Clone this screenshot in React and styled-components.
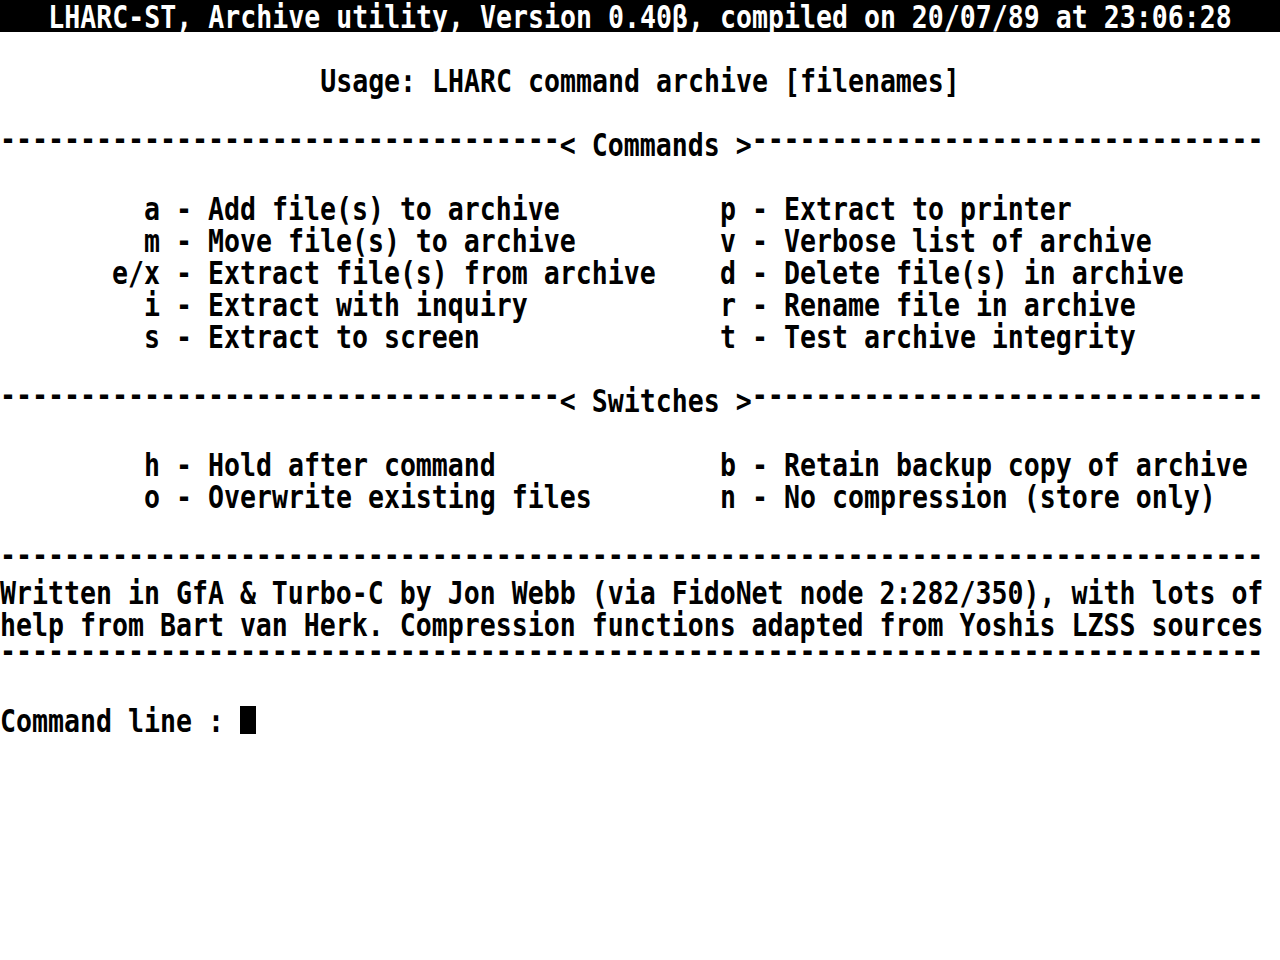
import React from "react";
import styled, { createGlobalStyle } from "styled-components";

const Global = createGlobalStyle`
  html, body { margin: 0; padding: 0; background: #ffffff; }
  body { width: 1280px; height: 960px; overflow: hidden; }
`;

const Screen = styled.main`
  width: 1280px;
  height: 960px;
  background: #ffffff;
  color: #000000;
  font-family: "DejaVu Sans Mono", "Liberation Mono", monospace;
  font-weight: bold;
  font-size: 26.576px;
  display: flex;
  flex-direction: column;
`;

const Line = styled.div`
  height: 32px;
  line-height: 32px;
  white-space: pre;
  display: flex;
  align-items: flex-start;
  justify-content: ${(p) => (p.$center ? "center" : "flex-start")};
  background: ${(p) => (p.$inverse ? "#000000" : "transparent")};
  color: ${(p) => (p.$inverse ? "#ffffff" : "#000000")};
`;

const Blank = styled.div`
  height: ${(p) => (p.$rows || 1) * 32}px;
`;

const Text = styled.span`
  display: inline-block;
  height: 26px;
  overflow: visible;
  white-space: pre;
  transform: scaleY(1.18);
  transform-origin: 0 10px;
  text-align: ${(p) => (p.$right ? "right" : "left")};
`;

const Dashes = styled(Text)`
  transform: translateY(-6px) scaleY(1.18);
`;

const CommandRow = styled.div`
  height: 32px;
  line-height: 32px;
  white-space: pre;
  display: grid;
  grid-template-columns: 160px 560px 16px 1fr;
`;

const Cursor = styled.span`
  display: inline-block;
  width: 16px;
  height: 28px;
  margin-top: 2px;
  background: #000000;
`;

const dashes = (n) => "-".repeat(n);

const Divider = ({ label }) => (
  <Line>
    <Dashes>{dashes(35)}</Dashes>
    <Text>{"< " + label + " >"}</Text>
    <Dashes>{dashes(32)}</Dashes>
  </Line>
);

const commands = [
  ["a", "Add file(s) to archive", "p", "Extract to printer"],
  ["m", "Move file(s) to archive", "v", "Verbose list of archive"],
  ["e/x", "Extract file(s) from archive", "d", "Delete file(s) in archive"],
  ["i", "Extract with inquiry", "r", "Rename file in archive"],
  ["s", "Extract to screen", "t", "Test archive integrity"],
];

const switches = [
  ["h", "Hold after command", "b", "Retain backup copy of archive"],
  ["o", "Overwrite existing files", "n", "No compression (store only)"],
];

const Entry = ({ item }) => (
  <CommandRow>
    <Text $right>{item[0]}</Text>
    <Text>{" - " + item[1]}</Text>
    <Text>{item[2]}</Text>
    <Text>{" - " + item[3]}</Text>
  </CommandRow>
);

export default function App() {
  return (
    <>
      <Global />
      <Screen>
        <Line $inverse $center>
          <Text>LHARC-ST, Archive utility, Version 0.40β, compiled on 20/07/89 at 23:06:28</Text>
        </Line>
        <Blank />
        <Line $center>
          <Text>Usage: LHARC command archive [filenames]</Text>
        </Line>
        <Blank />
        <Divider label="Commands" />
        <Blank />
        {commands.map((c) => (
          <Entry key={c[0]} item={c} />
        ))}
        <Blank />
        <Divider label="Switches" />
        <Blank />
        {switches.map((c) => (
          <Entry key={c[0]} item={c} />
        ))}
        <Blank />
        <Line>
          <Dashes>{dashes(79)}</Dashes>
        </Line>
        <Line>
          <Text>Written in GfA &amp; Turbo-C by Jon Webb (via FidoNet node 2:282/350), with lots of</Text>
        </Line>
        <Line>
          <Text>help from Bart van Herk. Compression functions adapted from Yoshis LZSS sources</Text>
        </Line>
        <Line>
          <Dashes>{dashes(79)}</Dashes>
        </Line>
        <Blank />
        <Line>
          <Text>Command line : </Text>
          <Cursor />
        </Line>
      </Screen>
    </>
  );
}
